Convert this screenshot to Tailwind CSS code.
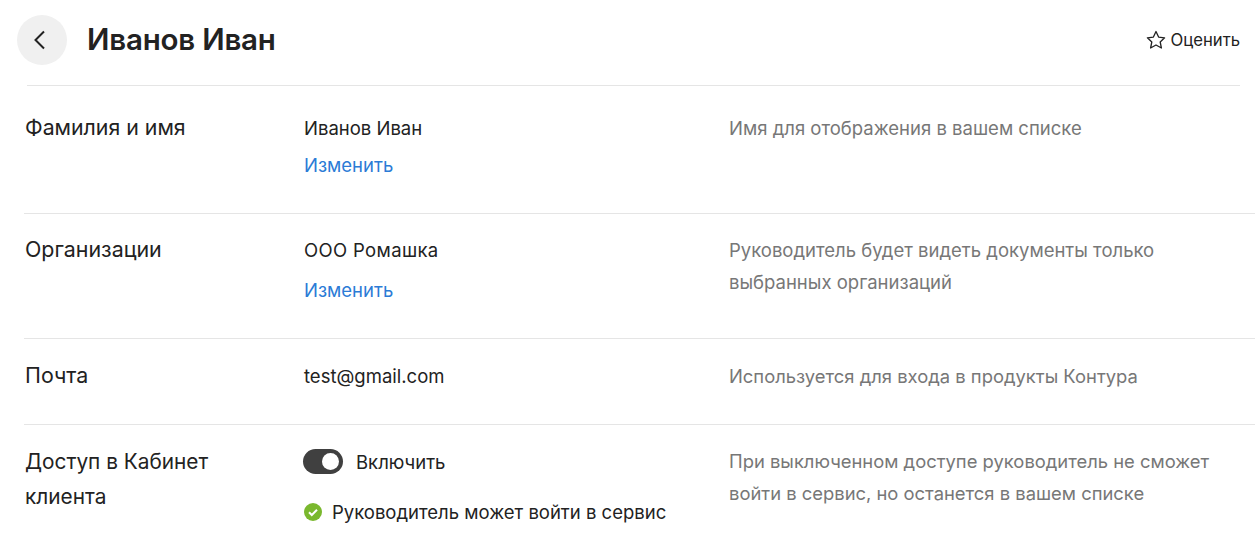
<!DOCTYPE html>
<html lang="ru">
<head>
  <meta charset="utf-8"/>
  <title>Иванов Иван</title>
  <script src="https://cdn.jsdelivr.net/npm/@tailwindcss/browser@4"></script>
</head>
<body class="bg-white text-[#222] font-['Inter','Noto_Sans',sans-serif] overflow-hidden">
  <div class="h-[545px] overflow-hidden">
    <header class="ml-[27px] mr-[15px] h-[86px] flex items-start justify-between border-b border-[#e5e5e5]">
      <div class="flex items-center gap-5 -ml-[10px] mt-[15px]">
        <button class="w-[50px] h-[50px] rounded-full bg-[#f0f0f0] flex items-center justify-center">
          <svg class="-ml-[6px]" width="14" height="20" viewBox="0 0 14 20" fill="none" stroke="#222" stroke-width="2"><path d="M12 1.500 3.500 10l8.500 8.500"/></svg>
        </button>
        <h1 class="text-[29.5px] leading-[48px] h-[50px] font-semibold tracking-[-0.2px]">Иванов Иван</h1>
      </div>
      <a class="flex items-center gap-[4px] mt-[29px] text-[16.7px] leading-[22px]">
        <svg width="20" height="20" viewBox="0 0 20 20" fill="none" stroke="#222" stroke-width="1.300" stroke-linejoin="round"><path d="m10 1.500 2.600 5.600 6 .7-4.400 4.200 1.200 6L10 15l-5.400 3 1.200-6L1.400 7.800l6-.7z"/></svg>
        Оценить
      </a>
    </header>
    <main class="ml-6">
      <section class="h-[128px] grid grid-cols-[280px_425px_1fr] border-b border-[#e5e5e5] pt-[24px]">
        <div class="text-[21.3px] leading-[36px] -mt-[1px] pl-[1px]">Фамилия и имя</div>
        <div class="text-[18.5px] leading-[36px]">
          <p>Иванов Иван</p>
          <a class="text-[#2b7bd6] block mt-[1px]">Изменить</a>
        </div>
        <p class="text-[18.5px] leading-[32px] text-[#777] mt-[2px]">Имя для отображения в вашем списке</p>
      </section>
      <section class="h-[125px] grid grid-cols-[280px_425px_1fr] border-b border-[#e5e5e5] pt-[18px]">
        <div class="text-[21.4px] leading-[36px] pl-[1px] -mt-[1px]">Организации</div>
        <div class="text-[18.5px] leading-[36px]">
          <p class="tracking-[0.35px]">ООО Ромашка</p>
          <a class="text-[#2b7bd6] block mt-[4px]">Изменить</a>
        </div>
        <p class="text-[18.5px] leading-[32px] text-[#777] pr-[60px] mt-[2px]">Руководитель будет видеть документы только выбранных организаций</p>
      </section>
      <section class="h-[86px] grid grid-cols-[280px_425px_1fr] border-b border-[#e5e5e5] pt-[19px]">
        <div class="text-[21.4px] leading-[36px] pl-[1px] -mt-[1px]">Почта</div>
        <div class="text-[18.5px] leading-[36px]">test@gmail.com</div>
        <p class="text-[18.4px] leading-[32px] text-[#777] mt-[2px]">Используется для входа в продукты Контура</p>
      </section>
      <section class="grid grid-cols-[280px_425px_1fr] pt-[18px]">
        <div class="text-[20.8px] leading-[35px] pr-[60px] pl-[1px] mt-[1px]">Доступ в Кабинет клиента</div>
        <div class="text-[18.500px]">
          <div class="flex items-center gap-[13px] h-[36px]">
            <span class="w-[40px] h-[25px] rounded-full bg-[#404040] flex items-center justify-end pr-[4px] -ml-[1px]">
              <span class="w-[17px] h-[17px] rounded-full bg-white"></span>
            </span>
            <span class="mt-[3px]">Включить</span>
          </div>
          <div class="flex items-center gap-[11px] h-[36px] mt-[15px]">
            <svg width="18" height="18" viewBox="0 0 18 18"><circle cx="9" cy="9" r="9" fill="#7ab82e"/><path d="m5 9.200 2.800 2.800L13 6.800" fill="none" stroke="#fff" stroke-width="2"/></svg>
            <span class="-ml-[1px] mt-[2px]">Руководитель может войти в сервис</span>
          </div>
        </div>
        <p class="text-[18.4px] leading-[31.500px] text-[#777] pr-[20px] mt-[3px]">При выключенном доступе руководитель не сможет войти в сервис, но останется в вашем списке</p>
      </section>
    </main>
  </div>
</body>
</html>
